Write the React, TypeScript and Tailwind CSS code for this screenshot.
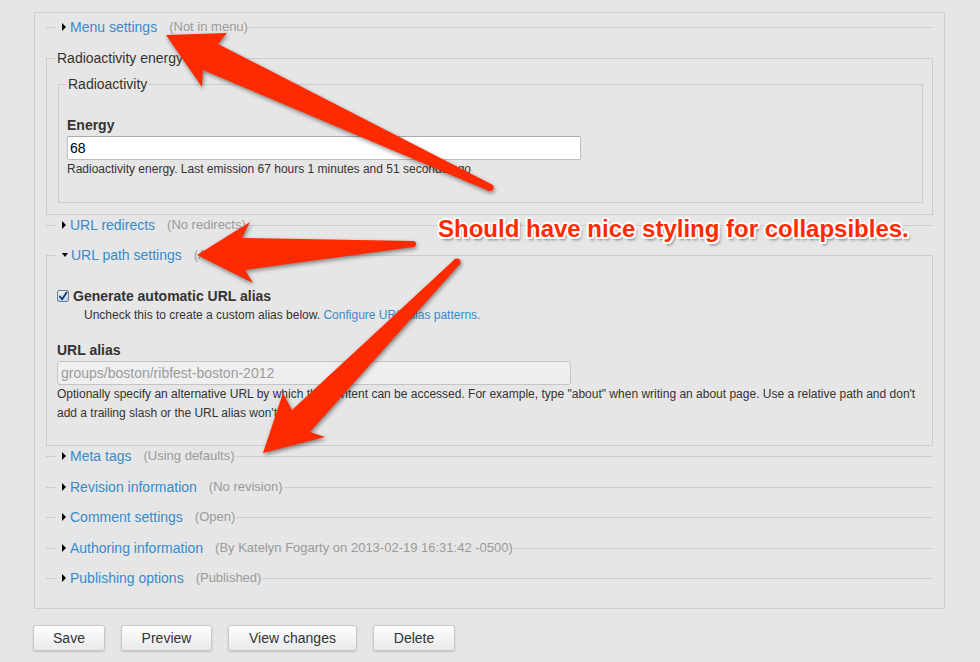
import React from "react";

const font = { fontFamily: '"Liberation Sans", Arial, sans-serif' };

function Collapsed({ title, summary, mt }: { title: string; summary: string; mt: string }) {
  return (
    <fieldset className={`border-t border-[#cccccc] pl-[9px] ${mt}`}>
      <legend className="pl-[7px] pr-[1px] leading-[20px] flex items-center">
        <span className="inline-block w-0 h-0 border-y-[4px] border-y-transparent border-l-[4px] border-l-black" />
        <span className="ml-[4px] text-[14px] text-[#378bcb]">{title}</span>
        <span className="ml-[12px] text-[13px] text-[#9a9a9a]">{summary}</span>
      </legend>
    </fieldset>
  );
}

function Button({ label, w }: { label: string; w: string }) {
  return (
    <button
      className={`${w} h-[26px] rounded-[3px] border border-[#c9c9c9] bg-gradient-to-b from-[#ffffff] to-[#e9e9e9] text-[14px] text-[#333] shadow-[0_1px_2px_rgba(0,0,0,0.18)]`}
    >
      {label}
    </button>
  );
}

export default function App() {
  return (
    <div className="relative min-h-[662px] w-[980px] bg-[#e6e6e6] pt-[12px] pl-[34px] text-[#333]" style={font}>
      <div className="w-[911px] border border-[#cfcfcf] px-[11px] pb-[20px]">
        <Collapsed title="Menu settings" summary="(Not in menu)" mt="mt-[4px]" />

        <fieldset className="mt-[11px] border border-[#cccccc] pl-[8px] pr-[9px] pb-[11px]">
          <legend className="px-[2px] leading-[20px] text-[14px] text-[#333]">Radioactivity energy</legend>
          <fieldset className="mt-[6px] ml-[3px] border border-[#cccccc] pl-[7px] pb-[24px]">
            <legend className="px-[2px] leading-[20px] text-[14px] text-[#333]">Radioactivity</legend>
            <div className="ml-[1px] mt-[22px]">
              <div className="text-[14px] font-bold leading-[18px] text-[#333]">Energy</div>
              <div className="mt-[2px] h-[24px] w-[514px] rounded-[2px] border border-[#bdbdbd] border-t-[#a9a9a9] bg-white pl-[2px] text-[14px] leading-[22px] text-black">
                68
              </div>
              <div className="text-[12px] leading-[18px] text-[#333]">
                Radioactivity energy. Last emission 67 hours 1 minutes and 51 seconds ago
              </div>
            </div>
          </fieldset>
        </fieldset>

        <Collapsed title="URL redirects" summary="(No redirects)" mt="mt-0" />

        <fieldset className="mt-[10px] border border-[#cccccc] pl-[8px] pr-[9px] pb-[22px]">
          <legend className="pl-[7px] pr-[1px] leading-[20px] flex items-center">
            <span className="inline-block w-0 h-0 border-x-[3px] border-x-transparent border-t-[4px] border-t-black" />
            <span className="ml-[3px] text-[14px] text-[#378bcb]">URL path settings</span>
            <span className="ml-[12px] text-[13px] text-[#9a9a9a]">(Automatic alias)</span>
          </legend>
          <div className="pl-[2px]">
            <div className="mt-[21px] flex items-center leading-[20px]">
              <span className="flex h-[12px] w-[12px] items-center justify-center rounded-[2px] border border-[#6b7f99] bg-gradient-to-b from-[#e6f0fb] to-[#b9d2ee]">
                <svg width="11" height="11" viewBox="0 0 11 11">
                  <path d="M2 5.5 L4.5 8.5 L9.5 1" fill="none" stroke="#17315a" strokeWidth="1.9" strokeLinecap="round" strokeLinejoin="round" />
                </svg>
              </span>
              <span className="ml-[4px] text-[14px] font-bold text-[#333]">Generate automatic URL alias</span>
            </div>
            <div className="pl-[27px] text-[12px] leading-[18px] text-[#333]">
              Uncheck this to create a custom alias below. <span className="text-[#378bcb]">Configure URL alias patterns.</span>
            </div>
            <div className="mt-[17px] text-[14px] font-bold leading-[18px] text-[#333]">URL alias</div>
            <div className="mt-[2px] h-[24px] w-[514px] rounded-[3px] border border-[#c4c4c4] bg-[#efefef] pl-[3px] text-[14px] leading-[22px] text-[#9c9c9c]">
              groups/boston/ribfest-boston-2012
            </div>
            <div className="text-[12px] leading-[19px] text-[#333]">
              Optionally specify an alternative URL by which this content can be accessed. For example, type "about" when writing an about page. Use a relative path and don't
              <br />
              add a trailing slash or the URL alias won't work.
            </div>
          </div>
        </fieldset>

        <Collapsed title="Meta tags" summary="(Using defaults)" mt="mt-0" />
        <Collapsed title="Revision information" summary="(No revision)" mt="mt-[11px]" />
        <Collapsed title="Comment settings" summary="(Open)" mt="mt-[10px]" />
        <Collapsed title="Authoring information" summary="(By Katelyn Fogarty on 2013-02-19 16:31:42 -0500)" mt="mt-[11px]" />
        <Collapsed title="Publishing options" summary="(Published)" mt="mt-[10px]" />
      </div>

      <div className="mt-[16px] -ml-[1px] flex gap-[16px]">
        <Button label="Save" w="w-[72px]" />
        <Button label="Preview" w="w-[91px]" />
        <Button label="View changes" w="w-[129px]" />
        <Button label="Delete" w="w-[82px]" />
      </div>

      <svg
        className="pointer-events-none absolute left-0 top-0"
        width="980"
        height="662"
        viewBox="0 0 980 662"
        style={{ filter: "drop-shadow(1px 2px 2px rgba(0,0,0,0.45))" }}
      >
        <g fill="#ff2a00">
          <polygon points="166,35 227,33 218,44 491,184 489,191 203,70 202,87" />
          <circle cx="490" cy="187.5" r="3.6" />
          <polygon points="197,255 250,222 242,238 413,241 413,247 245,270 253,283" />
          <circle cx="413" cy="244" r="3" />
          <polygon points="263,453 283,393 292,410 455,259 459,265 310,432 325,437" />
          <circle cx="457" cy="262" r="3.6" />
        </g>
      </svg>

      <div
        className="pointer-events-none absolute left-[438px] top-[215px] whitespace-nowrap text-[24px] font-bold leading-[28px] text-[#ff2a00] [text-shadow:2px_0_0_#fff,-2px_0_0_#fff,0_2px_0_#fff,0_-2px_0_#fff,1.5px_1.5px_0_#fff,-1.5px_1.5px_0_#fff,1.5px_-1.5px_0_#fff,-1.5px_-1.5px_0_#fff,2px_3px_3px_rgba(0,0,0,0.5)]"
        style={font}
      >
        Should have nice styling for collapsibles.
      </div>
    </div>
  );
}
